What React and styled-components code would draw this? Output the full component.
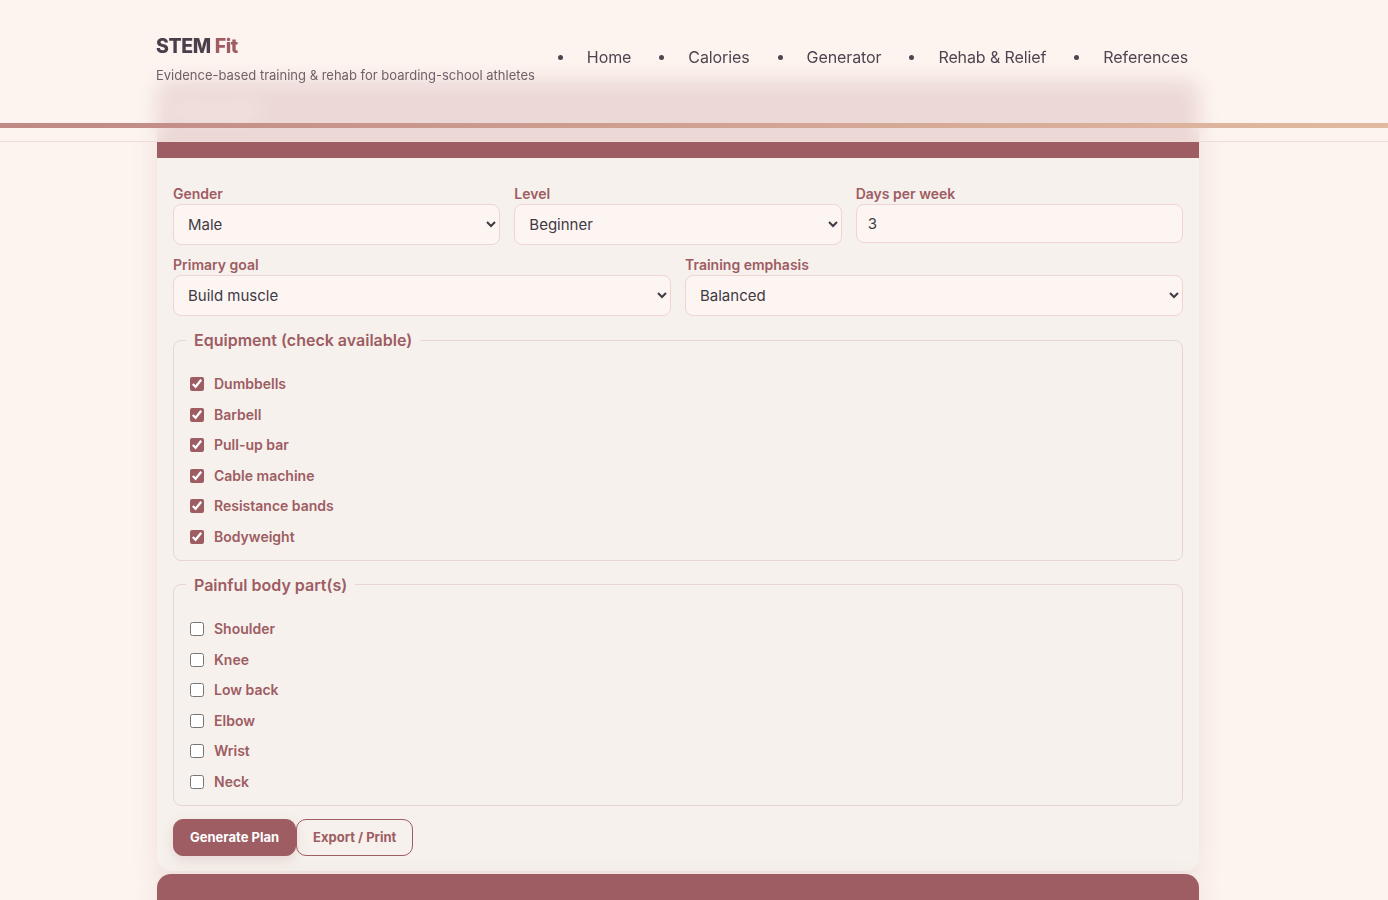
import React from "react";
import styled, { createGlobalStyle } from "styled-components";

const GlobalStyle = createGlobalStyle`
  * { box-sizing: border-box; }
  body {
    margin: 0;
    background: #fdf4ef;
    font-family: Inter, "Noto Sans", sans-serif;
    color: #3f3a45;
  }
`;

const Header = styled.header`
  position: fixed;
  top: 0;
  left: 0;
  right: 0;
  z-index: 10;
  height: 142px;
  background: rgba(253, 244, 239, 0.82);
  backdrop-filter: blur(10px);
  border-bottom: 1px solid #efdcd7;
`;

const HeaderInner = styled.div`
  height: 123px;
  width: 1032px;
  margin-left: calc(50% - 538px);
  padding-top: 34px;
  display: flex;
  align-items: flex-start;
  justify-content: space-between;
`;

const Brand = styled.div`
  display: flex;
  flex-direction: column;
`;

const Logo = styled.div`
  font-size: 19.5px;
  line-height: 24px;
  font-weight: 800;
  color: #4a3f4a;
  letter-spacing: -0.4px;
  > span { color: #9e5c63; }
`;

const Tagline = styled.div`
  margin-top: 8px;
  font-size: 13px;
  line-height: 18px;
  color: #6e6168;
`;

const Nav = styled.ul`
  list-style: none;
  margin: 11px 0 0;
  padding: 0;
  display: flex;
  gap: 28px;
`;

const NavItem = styled.li`
  display: flex;
  align-items: center;
  gap: 24px;
  font-size: 16px;
  line-height: 24px;
  color: #4d4550;
  letter-spacing: -0.1px;
  &::before {
    content: "";
    width: 5px;
    height: 5px;
    border-radius: 50%;
    background: #4d4550;
  }
`;

const Accent = styled.div`
  height: 5px;
  background: linear-gradient(90deg, #bf8985, #e1baa0);
`;

const Main = styled.main`
  padding-top: 80px;
  width: 1042px;
  margin-left: calc(50% - 537px);
  display: flex;
  flex-direction: column;
  gap: 3px;
`;

const Card = styled.section`
  background: #f6f1ec;
  border-radius: 14px;
  overflow: hidden;
  box-shadow: 0 10px 28px rgba(130, 80, 80, 0.12);
`;

const CardHead = styled.div`
  background: #9e5c63;
  height: ${(p) => p.$h}px;
  padding: 20px 16px;
  color: #fff;
  font-size: 18px;
  font-weight: 700;
`;

const CardBody = styled.div`
  padding: 28px 16px 15px;
  display: flex;
  flex-direction: column;
`;

const Row = styled.div`
  display: grid;
  grid-template-columns: repeat(${(p) => p.$cols}, 1fr);
  gap: 14px;
  margin-bottom: 12px;
`;

const Field = styled.label`
  display: flex;
  flex-direction: column;
`;

const Label = styled.span`
  font-size: 14px;
  line-height: 18px;
  font-weight: 600;
  color: #9e5c63;
  margin-top: -1px;
  margin-bottom: 1px;
`;

const Select = styled.select`
  height: 41px;
  padding: 0 10px;
  font-family: Inter, "Noto Sans", sans-serif;
  font-size: 15px;
  color: #3f3a45;
  background: #fdf5f1;
  border: 1px solid #efd4d0;
  border-radius: 8px;
`;

const Input = styled.input`
  height: 39px;
  padding: 0 11px;
  font-family: Inter, "Noto Sans", sans-serif;
  font-size: 15px;
  color: #3f3a45;
  background: #fdf5f1;
  border: 1px solid #efd4d0;
  border-radius: 8px;
`;

const Fieldset = styled.fieldset`
  margin: 2px 0 12px;
  padding: 24px 12px 13px;
  border: 1px solid #e9d5d1;
  border-radius: 8px;
  display: flex;
  flex-direction: column;
  gap: 10.6px;
`;

const Legend = styled.legend`
  padding: 0 8px;
  font-size: 16px;
  line-height: 20px;
  font-weight: 600;
  color: #9e5c63;
`;

const Check = styled.label`
  display: flex;
  align-items: center;
  gap: 10px;
  font-size: 14px;
  line-height: 20px;
  font-weight: 600;
  color: #9e5c63;
  > input {
    margin: 0 0 0 4px;
    width: 14px;
    height: 14px;
    accent-color: #9e5c63;
  }
`;

const Actions = styled.div`
  display: flex;
  margin-top: 1px;
`;

const Button = styled.button`
  height: 37px;
  padding: 0 16px;
  font-family: Inter, "Noto Sans", sans-serif;
  font-size: 13px;
  font-weight: 700;
  border-radius: 10px;
  border: 1px solid #9e5c63;
  background: ${(p) => (p.$primary ? "#9e5c63" : "transparent")};
  color: ${(p) => (p.$primary ? "#fff" : "#9e5c63")};
  box-shadow: ${(p) => (p.$primary ? "0 4px 12px rgba(158,92,99,0.18)" : "none")};
  cursor: pointer;
`;

const equipment = ["Dumbbells", "Barbell", "Pull-up bar", "Cable machine", "Resistance bands", "Bodyweight"];
const pains = ["Shoulder", "Knee", "Low back", "Elbow", "Wrist", "Neck"];
const links = ["Home", "Calories", "Generator", "Rehab & Relief", "References"];

export default function App() {
  return (
    <>
      <GlobalStyle />
      <Header>
        <HeaderInner>
          <Brand>
            <Logo>STEM <span>Fit</span></Logo>
            <Tagline>Evidence-based training &amp; rehab for boarding-school athletes</Tagline>
          </Brand>
          <Nav>
            {links.map((l) => (
              <NavItem key={l}>{l}</NavItem>
            ))}
          </Nav>
        </HeaderInner>
        <Accent />
      </Header>

      <Main>
        <Card>
          <CardHead $h={78}>Generator</CardHead>
          <CardBody>
            <Row $cols={3}>
              <Field>
                <Label>Gender</Label>
                <Select defaultValue="Male">
                  <option>Male</option>
                  <option>Female</option>
                </Select>
              </Field>
              <Field>
                <Label>Level</Label>
                <Select defaultValue="Beginner">
                  <option>Beginner</option>
                  <option>Intermediate</option>
                  <option>Advanced</option>
                </Select>
              </Field>
              <Field>
                <Label>Days per week</Label>
                <Input type="text" defaultValue="3" />
              </Field>
            </Row>
            <Row $cols={2}>
              <Field>
                <Label>Primary goal</Label>
                <Select defaultValue="Build muscle">
                  <option>Build muscle</option>
                  <option>Lose fat</option>
                  <option>Get stronger</option>
                </Select>
              </Field>
              <Field>
                <Label>Training emphasis</Label>
                <Select defaultValue="Balanced">
                  <option>Balanced</option>
                  <option>Upper body</option>
                  <option>Lower body</option>
                </Select>
              </Field>
            </Row>

            <Fieldset>
              <Legend>Equipment (check available)</Legend>
              {equipment.map((e) => (
                <Check key={e}>
                  <input type="checkbox" defaultChecked />
                  {e}
                </Check>
              ))}
            </Fieldset>

            <Fieldset>
              <Legend>Painful body part(s)</Legend>
              {pains.map((p) => (
                <Check key={p}>
                  <input type="checkbox" />
                  {p}
                </Check>
              ))}
            </Fieldset>

            <Actions>
              <Button $primary>Generate Plan</Button>
              <Button>Export / Print</Button>
            </Actions>
          </CardBody>
        </Card>
        <Card>
          <CardHead $h={120} />
        </Card>
      </Main>
    </>
  );
}
